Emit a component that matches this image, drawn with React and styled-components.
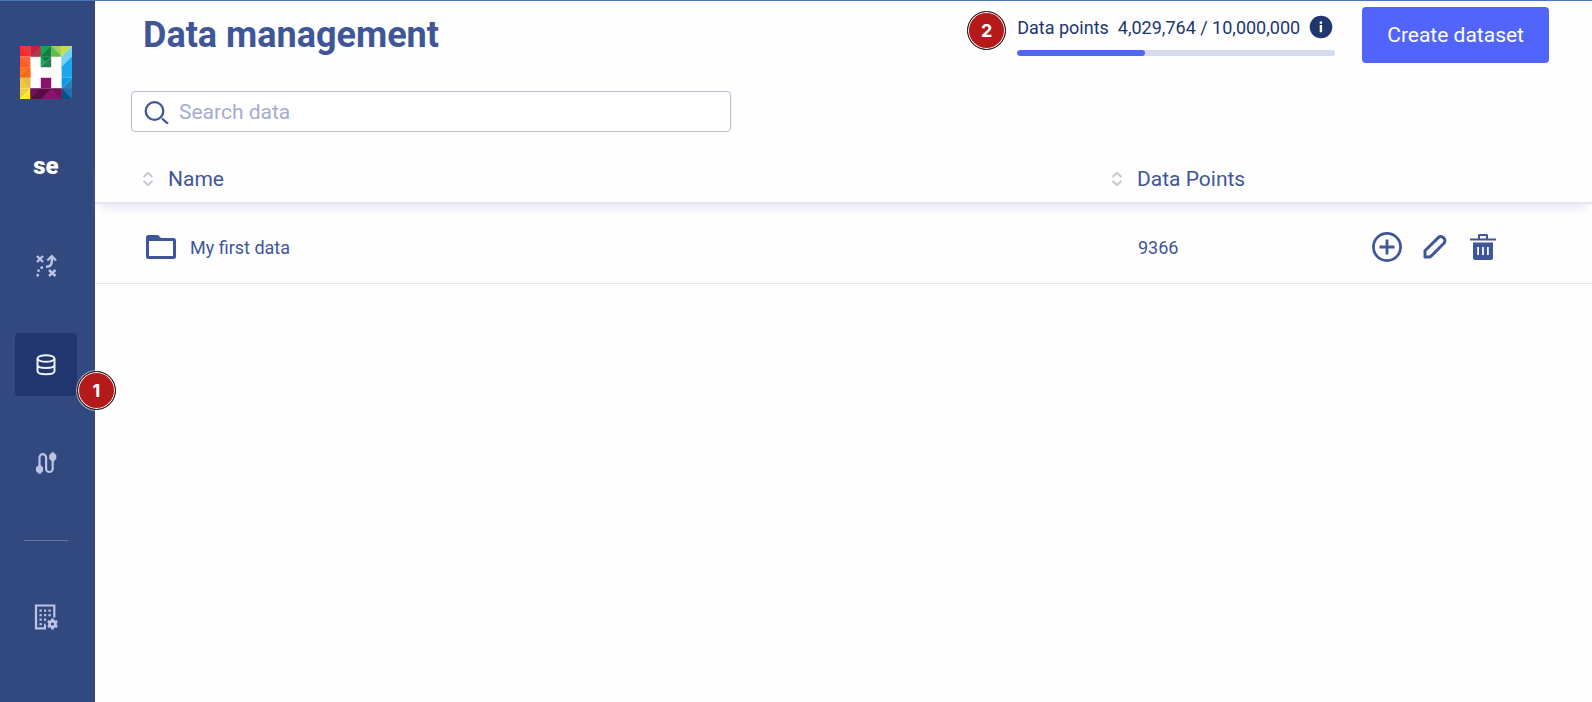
import React from "react";
import styled, { createGlobalStyle } from "styled-components";

const GlobalStyle = createGlobalStyle`
  *, *::before, *::after { box-sizing: border-box; }
  body {
    margin: 0;
    background: #fefefe;
    color: #3f5698;
    font-family: Roboto, "Liberation Sans", sans-serif;
  }
  button, input { font: inherit; }
`;

const Page = styled.div`
  display: flex;
  min-height: 100vh;
  border-top: 1px solid #4a77b4;
`;

const Sidebar = styled.aside`
  display: flex;
  flex-direction: column;
  align-items: center;
  flex: 0 0 95px;
  padding: 45px 3px 0 0;
  background: #32497f;
`;

const LogoLink = styled.a`
  display: block;
  height: 53px;
`;

const Workspace = styled.div`
  margin: 52px 0 53px;
  color: #fff;
  font-size: 24px;
  line-height: 30px;
  font-weight: 900;
`;

const Nav = styled.nav`
  display: flex;
  flex-direction: column;
  align-items: center;
  gap: 36px;
`;

const NavItem = styled.a`
  position: relative;
  display: grid;
  place-items: center;
  width: 62px;
  height: 63px;
  border-radius: 4px;
  color: ${(p) => (p.$active ? "#eef0fb" : "#bcc3e3")};
  background: ${(p) => (p.$active ? "#21366f" : "transparent")};
`;

const Divider = styled.hr`
  width: 44px;
  margin: 9px 0 8px;
  border: 0;
  border-top: 1px solid #6476a1;
`;

const Marker = styled.span`
  position: absolute;
  top: ${(p) => p.$top}px;
  left: ${(p) => p.$left}px;
  z-index: 1;
  display: grid;
  place-items: center;
  width: 39px;
  height: 39px;
  border: 1px solid #111;
  border-radius: 50%;
  background: #b51a1a;
  box-shadow: inset 0 0 0 1px #fff, 0 0 0 1px #ffffff88;
  color: #fff;
  font-family: Inter, sans-serif;
  font-size: 18px;
  font-weight: 700;
`;

const Main = styled.main`
  flex: 1;
  min-width: 0;
`;

const TopBar = styled.header`
  display: flex;
  align-items: flex-start;
  padding: 6px 43px 0 48px;
`;

const Title = styled.h1`
  flex: 1;
  margin: 0;
  font-size: 36px;
  line-height: 56px;
  font-weight: 700;
`;

const Usage = styled.section`
  position: relative;
  width: 318px;
  margin-right: 27px;
  padding-top: 8px;
`;

const UsageText = styled.div`
  display: flex;
  align-items: center;
  gap: 9px;
  height: 24px;
  color: #21366f;
  font-size: 18px;
  white-space: nowrap;
`;

const InfoButton = styled.button`
  display: grid;
  padding: 0;
  border: 0;
  background: none;
  cursor: pointer;
`;

const Track = styled.div`
  height: 6px;
  margin-top: 11px;
  border-radius: 3px;
  background: #d6daed;
  overflow: hidden;
`;

const Fill = styled.div`
  height: 100%;
  border-radius: 3px;
  background: #5165fb;
`;

const PrimaryButton = styled.button`
  height: 56px;
  padding: 0 25px;
  border: 0;
  border-radius: 4px;
  background: #5165fb;
  color: #fff;
  font-size: 21px;
  white-space: nowrap;
  cursor: pointer;
`;

const SearchBox = styled.label`
  display: flex;
  align-items: center;
  gap: 10px;
  max-width: 600px;
  height: 41px;
  margin: 28px 36px 22px;
  padding: 0 12px;
  border: 1px solid #b4b9da;
  border-radius: 4px;
  background: #fff;
`;

const SearchInput = styled.input`
  flex: 1;
  min-width: 0;
  padding: 0;
  border: 0;
  outline: 0;
  background: none;
  color: #3f5698;
  font-size: 21px;
  &::placeholder { color: #a5acd0; opacity: 1; }
`;

const Table = styled.table`
  width: 100%;
  table-layout: fixed;
  border-collapse: separate;
  border-spacing: 0;
`;

const Column = styled.col`
  width: ${(p) => p.$width};
`;

const HeadRow = styled.tr`
  position: relative;
  box-shadow: 0 10px 8px -6px #e6e5f4;
`;

const HeadCell = styled.th`
  height: 50px;
  padding: 2px 0 0 ${(p) => p.$indent || 0}px;
  border-bottom: 2px solid #e6e5f4;
  font-weight: 400;
  text-align: left;
`;

const SortButton = styled.button`
  display: flex;
  align-items: center;
  gap: 14px;
  padding: 0;
  border: 0;
  background: none;
  color: inherit;
  font-size: 21px;
  cursor: pointer;
`;

const Cell = styled.td`
  height: 80px;
  padding: 7px 0 0 ${(p) => p.$indent}px;
  border-bottom: 1px solid #e6e6f3;
  font-size: 18px;
`;

const FolderLink = styled.a`
  display: flex;
  align-items: center;
  gap: 14px;
  color: inherit;
  text-decoration: none;
`;

const Actions = styled.div`
  display: flex;
  align-items: center;
  gap: 16px;
`;

const IconButton = styled.button`
  display: grid;
  place-items: center;
  width: 32px;
  height: 32px;
  padding: 0;
  border: 0;
  background: none;
  color: inherit;
  cursor: pointer;
`;

const Logo = () => (
  <svg width="52" height="53" viewBox="0 0 50 50" preserveAspectRatio="none" aria-hidden="true">
    <path fill="#fff" d="M0 0h50v50H0z" />
    <path fill="#ff292c" d="M0 0h10v10H0z" />
    <path fill="#e33a42" d="M0 0h10v10z" />
    <path fill="#c71f3b" d="M10 0h10v10H10z" />
    <path fill="#aa3d48" d="M20 0v10H10z" />
    <path fill="#16a356" d="M20 0h10v10H20z" />
    <path fill="#107d45" d="M30 0v10H20z" />
    <path fill="#107d45" d="M20 10h10L20 20z" />
    <path fill="#2b7c58" d="M30 10v10H20z" />
    <path fill="#18ad5d" d="M20 10l5 5-5 5z" />
    <path fill="#a1cf62" d="M30 0h10v10H30z" />
    <path fill="#5dbb55" d="M30 0l10 10H30z" />
    <path fill="#c9df40" d="M40 0h10L40 10z" />
    <path fill="#76d0ef" d="M50 0v10H40z" />
    <path fill="#f4693a" d="M0 10h10v10H0z" />
    <path fill="#ff5b24" d="M0 10l10 10H0z" />
    <path fill="#ff711d" d="M0 20h10v10H0z" />
    <path fill="#f36825" d="M10 20v10H0z" />
    <path fill="#f4ca3d" d="M0 30h10v10H0z" />
    <path fill="#e4bc4b" d="M0 30l10 10V30z" />
    <path fill="#f4cb3d" d="M0 40h10L0 50z" />
    <path fill="#fff021" d="M10 40v10H0z" />
    <path fill="#50b6ec" d="M40 10h10v10H40z" />
    <path fill="#79d0f3" d="M40 10h10L40 20z" />
    <path fill="#1ca7ec" d="M50 10v20H40V20z" />
    <path fill="#029fe4" d="M40 30h10L40 40z" />
    <path fill="#2683bc" d="M50 30v10H40z" />
    <path fill="#0c4e86" d="M40 40h10v10H40z" />
    <path fill="#1b70b2" d="M40 40h10v10z" />
    <path fill="#550d43" d="M10 40h30v10H10z" />
    <path fill="#75135a" d="M10 40h10L10 50zM30 40h10v10z" />
    <path fill="#8d1168" d="M20 30h10v10l10 10H20l10-10H20z" />
  </svg>
);

const Strategy = () => (
  <svg width="24" height="24" viewBox="0 1 24 24" fill="none" stroke="currentColor" strokeWidth="2.400" aria-hidden="true">
    <path d="M3 3l6 6M9 3l-6 6M15 17l6.500 6M21.500 17l-6.500 6" />
    <path d="M13.300 7.500L17.800 3.200 22 7.500M17.800 3.500v5.200c0 3.200-2 5-5.800 5" />
    <path d="M9 14.200l-2.500 1M5 16.500l-1 2.200M3.700 21v2.500" />
  </svg>
);

const Database = () => (
  <svg width="24" height="24" viewBox="0 0 24 24" fill="none" stroke="currentColor" strokeWidth="2" aria-hidden="true">
    <ellipse cx="12" cy="5.500" rx="8.500" ry="3.300" />
    <path d="M3.500 5.500v12.500c0 4.300 17 4.300 17 0V5.500M3.500 11.700c0 4.300 17 4.300 17 0" />
  </svg>
);

const Cable = () => (
  <svg width="24" height="24" viewBox="0 1 24 24" fill="none" aria-hidden="true">
    <path d="M5.500 17V6.500a3.300 3.300 0 0 1 6.600 0v11.200a3.300 3.300 0 0 0 6.600 0V7" stroke="currentColor" strokeWidth="2.200" />
    <path fill="currentColor" d="M4 14h3.200v1.300L9 16v4.200l-1.600 1.300v1H3.800v-1L2 20.200V16l2-.7zM17 1.500h3.500v1L22.300 4v4.200l-1.600.8v1.300H17V9l-1.800-.8V4L17 2.500z" />
  </svg>
);

const Building = () => (
  <svg width="26" height="26" viewBox="0 0 26 26" fill="none" aria-hidden="true">
    <path d="M13 24.300H3V1.500h18.300v12" stroke="currentColor" strokeWidth="2.200" />
    <path fill="currentColor" d="M6.500 5.500h2.200v2.200H6.500zm4.500 0h2.200v2.200H11zm4.500 0h2.200v2.200h-2.200zM6.500 10h2.200v2.200H6.500zm4.500 0h2.200v2.200H11zm4.500 0h2.200v2.200h-2.200zM6.500 14.500h2.200v2.200H6.500zm4.500 0h2.200v2.200H11zM6.500 19h2.200v2.200H6.500zM11 19l2 2v3h-2z" />
    <circle cx="19.500" cy="20" r="3" stroke="currentColor" strokeWidth="2.800" />
    <path d="M19.500 16.500v-2M19.500 23.500v2M16.500 18.200l-1.700-1M22.500 21.800l1.700 1M16.500 21.800l-1.700 1M22.500 18.200l1.700-1" stroke="currentColor" strokeWidth="2.600" />
  </svg>
);

const SearchIcon = () => (
  <svg width="25" height="25" viewBox="0 0 25 25" fill="none" stroke="#3f5698" strokeWidth="2.300" aria-hidden="true">
    <circle cx="10.500" cy="12" r="8.800" />
    <path d="M18 19.500l6 5.300" />
  </svg>
);

const SortIcon = () => (
  <svg width="12" height="16" viewBox="0 0 12 16" fill="none" stroke="#cbc8d6" strokeWidth="2.200" aria-hidden="true">
    <path d="M1.500 6L6 1.900 10.500 6M1.500 10L6 14.100 10.500 10" />
  </svg>
);

const InfoIcon = () => (
  <svg width="24" height="24" viewBox="0 0 24 24" aria-hidden="true">
    <circle cx="12" cy="12" r="11.300" fill="#21366f" />
    <path fill="#fff" d="M10.700 6.500h2.400v2.200h-2.400zM10.700 10h2.400v7.300h-2.400z" />
  </svg>
);

const FolderIcon = () => (
  <svg width="30" height="24" viewBox="0 0 30 24" aria-hidden="true">
    <path fill="currentColor" fillRule="evenodd" d="M2.500 0H12l3 3h12.500A2.500 2.500 0 0 1 30 5.500v16a2.500 2.500 0 0 1-2.500 2.500h-25A2.500 2.500 0 0 1 0 21.500v-19A2.500 2.500 0 0 1 2.500 0zM3 6v15h24V6z" />
  </svg>
);

const AddIcon = () => (
  <svg width="30" height="30" viewBox="0 0 30 30" fill="none" stroke="currentColor" strokeWidth="2.800" aria-hidden="true">
    <circle cx="15" cy="15" r="13.600" />
    <path d="M15 7.500v15M7.500 15h15" />
  </svg>
);

const EditIcon = () => (
  <svg width="24" height="24" viewBox="0 0 24 24" fill="none" stroke="currentColor" strokeWidth="3" strokeLinejoin="round" aria-hidden="true">
    <path d="M2 22v-6.300L15.300 2.600a3.500 3.500 0 0 1 5 0l.6.600a3.500 3.500 0 0 1 0 5L9 20.300 6.800 22z" />
  </svg>
);

const TrashIcon = () => (
  <svg width="26" height="26" viewBox="0 0 26 26" aria-hidden="true">
    <path fill="currentColor" fillRule="evenodd" d="M9 0h8l1 1v3.500h8v2H0v-2h8V1zm1 2v2.500h6V2zM3 8.500h20V24a2 2 0 0 1-2 2H5a2 2 0 0 1-2-2zM7.200 13v8H9v-8zm4.900 0v8h1.800v-8zm4.900 0v8h1.800v-8z" />
  </svg>
);

const used = 4029764;
const limit = 10000000;
const datasets = [{ name: "My first data", points: 9366 }];

export default function App() {
  return (
    <>
      <GlobalStyle />
      <Page>
        <Sidebar>
          <LogoLink href="#" aria-label="Home"><Logo /></LogoLink>
          <Workspace>se</Workspace>
          <Nav aria-label="Main">
            <NavItem href="#strategy" aria-label="Strategy"><Strategy /></NavItem>
            <NavItem href="#data" aria-label="Data" aria-current="page" $active>
              <Database />
              <Marker $top={38} $left={62}>1</Marker>
            </NavItem>
            <NavItem href="#connections" aria-label="Connections"><Cable /></NavItem>
            <Divider />
            <NavItem href="#organization" aria-label="Organization settings"><Building /></NavItem>
          </Nav>
        </Sidebar>
        <Main>
          <TopBar>
            <Title>Data management</Title>
            <Usage>
              <Marker $top={4} $left={-50}>2</Marker>
              <UsageText>
                <span>Data points</span>
                <span>{used.toLocaleString("en-US")} / {limit.toLocaleString("en-US")}</span>
                <InfoButton type="button" aria-label="About data points"><InfoIcon /></InfoButton>
              </UsageText>
              <Track><Fill style={{ width: `${(used / limit) * 100}%` }} /></Track>
            </Usage>
            <PrimaryButton type="button">Create dataset</PrimaryButton>
          </TopBar>
          <SearchBox>
            <SearchIcon />
            <SearchInput type="text" placeholder="Search data" aria-label="Search data" />
          </SearchBox>
          <Table>
            <colgroup>
              <Column />
              <Column $width="260px" />
              <Column $width="221px" />
            </colgroup>
            <thead>
              <HeadRow>
                <HeadCell $indent={47}>
                  <SortButton type="button"><SortIcon />Name</SortButton>
                </HeadCell>
                <HeadCell>
                  <SortButton type="button"><SortIcon />Data Points</SortButton>
                </HeadCell>
                <HeadCell aria-label="Actions" />
              </HeadRow>
            </thead>
            <tbody>
              {datasets.map((d) => (
                <tr key={d.name}>
                  <Cell $indent={51}>
                    <FolderLink href="#dataset"><FolderIcon />{d.name}</FolderLink>
                  </Cell>
                  <Cell $indent={27}>{d.points}</Cell>
                  <Cell $indent={0}>
                    <Actions>
                      <IconButton type="button" aria-label="Add"><AddIcon /></IconButton>
                      <IconButton type="button" aria-label="Edit"><EditIcon /></IconButton>
                      <IconButton type="button" aria-label="Delete"><TrashIcon /></IconButton>
                    </Actions>
                  </Cell>
                </tr>
              ))}
            </tbody>
          </Table>
        </Main>
      </Page>
    </>
  );
}
